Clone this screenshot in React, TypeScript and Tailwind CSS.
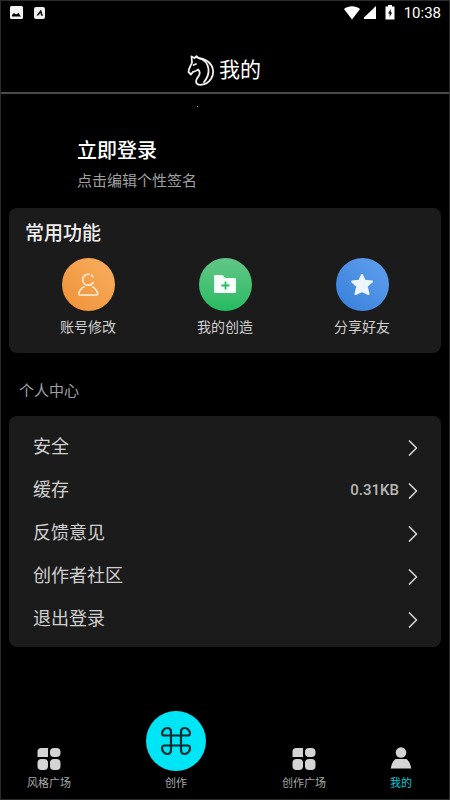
import React from 'react';
import { ChevronRight } from 'lucide-react';

const QUICK_ACTIONS = [
  { label: '账号修改', color: 'bg-linear-to-tr from-[#ee9136] to-[#f9ae5e]', icon: 'user' },
  { label: '我的创造', color: 'bg-linear-to-t from-[#22bb62] to-[#61c688]', icon: 'folder' },
  { label: '分享好友', color: 'bg-linear-to-tr from-[#357fda] to-[#62a0ee]', icon: 'star' },
];

const MENU_ITEMS = [
  { label: '安全' },
  { label: '缓存', value: '0.31KB' },
  { label: '反馈意见' },
  { label: '创作者社区' },
  { label: '退出登录' },
];

const StatusBar: React.FC = () => (
  <div className="flex h-6 items-center justify-between px-2 text-white">
    <div className="flex items-center gap-2">
      <svg className="h-4 w-4" viewBox="0 0 16 16">
        <rect x="1" y="1" width="13" height="13" rx="1.5" fill="#f4f4f4" />
        <path d="M3 11.5V10l2-2 2 1.500L9.500 8l2.500 3.500z" fill="#000" />
      </svg>
      <svg className="h-4 w-4" viewBox="0 0 16 16">
        <rect x="1" y="2" width="11" height="12" rx="2" fill="#f0f0f0" />
        <path d="M3.500 10.500L8 4.500l2 6.500-2-.6-.6-2.400-2 2.600z" fill="#111" />
      </svg>
    </div>
    <div className="flex items-center gap-1">
      <svg className="h-4 w-4" viewBox="0 0 16 16" fill="#fff">
        <path d="M0 4C4.500.2 11.500.2 16 4L8 14.500z" />
      </svg>
      <svg className="h-4 w-3" viewBox="0 0 12 16" fill="#fff">
        <path d="M12 1v13H0V12.500z" />
      </svg>
      <svg className="mx-1 h-4 w-3" viewBox="0 0 12 16">
        <path d="M4 0h4v1.500h2.500v13h-9v-13H4z" fill="#fff" />
        <path d="M6.800 4L4 8.500h1.600V12l2.700-4.500H6.800z" fill="#111" />
      </svg>
      <span className="font-[Roboto,sans-serif] text-[15px] leading-5">10:38</span>
    </div>
  </div>
);

const HorseLogo: React.FC = () => (
  <svg className="h-8 w-7" viewBox="0 0 28 32" fill="none" stroke="#f2f2f2" strokeWidth="1.800" strokeLinecap="round" strokeLinejoin="round">
    <path d="M5 8.500L4.500 2.500l3 1.500 2-1.700 2 1.700c6 .8 10.500 3.300 13 7.500 2.300 4.300 2 9.500-.5 13.500-2.500 3.700-6.500 5.800-11 5.800-3.500 0-4.500-2.500-3.500-5.300 1-2.500 3.300-3.500 3.200-6.700 0-1.600-.7-2.500-1.700-3.300-1.300 1.500-3.300 2-5 2.300L4 20.500 1.500 18c0-3.500 2.300-6 3.500-9.500z" />
    <path d="M11.500 4c6 1.800 9.500 6 10 11 .4 4.500-1 9-4.500 13" />
    <path d="M6.500 11l2.500-1" />
  </svg>
);

const ActionIcon: React.FC<{ name: string }> = ({ name }) => {
  if (name === 'user') {
    return (
      <svg className="h-6 w-6" viewBox="0 0 24 24" fill="none" stroke="#fff1df" strokeWidth="1.500" strokeLinecap="round" strokeLinejoin="round">
        <path d="M13 1.300C9.500 1 6.700 3.300 6.700 6.700c0 3.300 2.500 5.500 5.500 5.500 2.300 0 4-1 5-2.700" />
        <path d="M15.500 2.300l1.500 1.500" />
        <path d="M8 13.800c-2.300 1.200-4.500 3.700-5.200 6.500-.3 1.200.2 1.700 1.200 1.700h16.500c1 0 1.500-.5 1.200-1.700-.7-2.800-2.900-5.300-5.200-6.500" />
      </svg>
    );
  }
  if (name === 'folder') {
    return (
      <svg className="h-6 w-6" viewBox="0 0 24 24">
        <path d="M2 2h7.500L12 5h10c.6 0 1 .4 1 1v13c0 .6-.4 1-1 1H2c-.6 0-1-.4-1-1V3c0-.6.4-1 1-1z" fill="#f4fff7" />
        <path d="M12.500 8.500v8M8.500 12.500h8" stroke="#2fb867" strokeWidth="1.800" />
      </svg>
    );
  }
  return (
    <svg className="h-6 w-6" viewBox="0 0 24 24" fill="#edf6ff" stroke="#edf6ff" strokeWidth="2" strokeLinejoin="round">
      <path d="M12 2l2.800 5.700 7.200.9-5.300 4.700 1.800 7.700-6.500-3-6.500 3 1.800-7.700L2 8.600l7.200-.9z" />
    </svg>
  );
};

const GridIcon: React.FC = () => (
  <svg className="h-6 w-6" viewBox="0 0 24 24" fill="#d4d4d4">
    <path d="M4 1h7v9H.5V4.500C.5 2.500 2 1 4 1z" />
    <rect x="13" y="1" width="10.500" height="9" rx="4" />
    <rect x=".5" y="12" width="10.500" height="11" rx="4" />
    <rect x="13" y="12" width="10.500" height="11" rx="4" />
  </svg>
);

const PersonIcon: React.FC = () => (
  <svg className="h-6 w-6" viewBox="0 0 24 24" fill="#d4d4d4">
    <circle cx="12" cy="5.500" r="5.300" />
    <path d="M6.500 12h11c2.500 2 4 5 4.700 9.500H1.800c.7-4.500 2.200-7.500 4.700-9.500z" />
  </svg>
);

const CommandIcon: React.FC = () => (
  <svg className="h-8 w-8" viewBox="0 0 32 32" fill="none" stroke="#06272c" strokeWidth="2.200" strokeLinejoin="round">
    <path d="M11 10.500V7C11 4.500 9.500 3 7.300 3 4.500 3 2 6 2 8.500c0 1.500 1 2 2.500 2h23c1.500 0 2.500-.5 2.500-2C30 6 27.500 3 24.700 3 22.500 3 21 4.500 21 7v17.500c0 3 1.500 4.500 3.700 4.500 2.800 0 5.300-3 5.300-6 0-1.500-1-2.500-2.500-2.500h-23C3 20.500 2 21.500 2 23c0 3 2.500 6 5.300 6 2.200 0 3.700-1.500 3.700-4.500z" />
  </svg>
);

const App: React.FC = () => {
  return (
    <div className="flex min-h-screen flex-col border border-[#2c2c2c] bg-black font-['Liberation_Sans','Noto_Sans_CJK_SC',sans-serif] text-white">
      <StatusBar />

      <header className="flex h-[69px] items-center justify-center gap-1 border-b-2 border-[#4a4a4a] pr-0.5 pt-[22px]">
        <HorseLogo />
        <h1 className="text-[21px] leading-8">我的</h1>
      </header>

      <main className="flex-1 px-2">
        <span className="mx-47 mt-3 block h-px w-px bg-gray-400" />

        {/* Login */}
        <section className="flex flex-col items-start pl-17 pt-7">
          <button className="text-[20px] font-medium leading-8">立即登录</button>
          <button className="text-[15px] leading-7 text-[#a0a0a0]">点击编辑个性签名</button>
        </section>

        {/* Quick actions */}
        <section className="mt-[13px] h-[145px] rounded-lg bg-[#1b1b1b] pt-2">
          <h2 className="px-4 text-[19px] font-medium leading-9 text-[#f0f0f0]">常用功能</h2>
          <div className="mt-1.5 flex justify-between px-[51px]">
            {QUICK_ACTIONS.map((action) => (
              <button key={action.label} className="flex flex-col items-center">
                <span className={`flex size-[53px] items-center justify-center rounded-full ${action.color}`}>
                  <ActionIcon name={action.icon} />
                </span>
                <span className="mt-1 text-[14px] leading-6 text-[#d0d0d0]">{action.label}</span>
              </button>
            ))}
          </div>
        </section>

        <h2 className="mt-6 pl-2.5 text-[15px] leading-7 text-[#a0a0a0]">个人中心</h2>

        {/* Settings list */}
        <ul className="mt-[11px] rounded-lg bg-[#1b1b1b] pb-1.5 pt-2.5">
          {MENU_ITEMS.map((item) => (
            <li key={item.label}>
              <button className="flex h-[43px] w-full items-center pl-6 pr-3.5 text-left">
                <span className="flex-1 text-[18px] text-[#d0d0d0]">{item.label}</span>
                {item.value && (
                  <span className="font-[Roboto,sans-serif] text-[15px] font-medium text-[#b8b8b8]">{item.value}</span>
                )}
                <ChevronRight className="h-7 w-7 text-[#d0d0d0]" strokeWidth={1.5} />
              </button>
            </li>
          ))}
        </ul>
      </main>

      <nav className="grid grid-cols-[96fr_158fr_98fr_96fr] items-end pb-2 text-[11px] leading-4 text-[#a8a8a8]">
        <a href="#styles" className="flex flex-col items-center gap-1">
          <GridIcon />
          风格广场
        </a>
        <a href="#create" className="flex flex-col items-center gap-1">
          <span className="flex size-15 items-center justify-center rounded-full bg-[#00e5f5]">
            <CommandIcon />
          </span>
          创作
        </a>
        <a href="#works" className="flex flex-col items-center gap-1">
          <GridIcon />
          创作广场
        </a>
        <a href="#mine" className="flex flex-col items-center gap-1 text-[#00c8d8]">
          <PersonIcon />
          我的
        </a>
      </nav>
    </div>
  );
};

export default App;
